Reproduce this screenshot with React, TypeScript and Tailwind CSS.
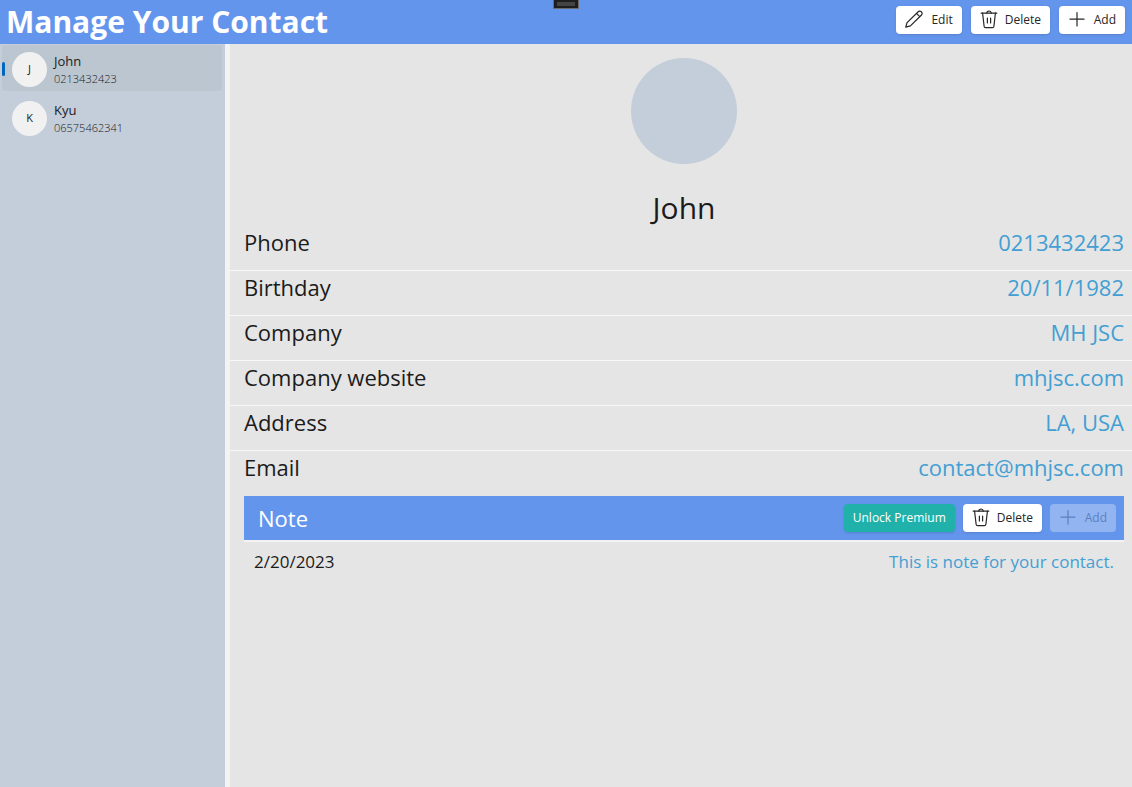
import React, { useState } from 'react';

const contacts = [
  { id: 1, name: 'John', phone: '0213432423' },
  { id: 2, name: 'Kyu', phone: '06575462341' },
];

const details = [
  { label: 'Phone', value: '0213432423' },
  { label: 'Birthday', value: '20/11/1982' },
  { label: 'Company', value: 'MH JSC' },
  { label: 'Company website', value: 'mhjsc.com' },
  { label: 'Address', value: 'LA, USA' },
  { label: 'Email', value: 'contact@mhjsc.com' },
];

const notes = [{ date: '2/20/2023', text: 'This is note for your contact.' }];

function PencilIcon() {
  return (
    <svg className="h-5 w-5" viewBox="0 0 20 20" fill="none" stroke="currentColor" strokeWidth="1.2" strokeLinejoin="round">
      <path d="M1.7 17.2 3.1 12.6 14.2 1.7a2.1 2.1 0 0 1 3 0l.3.3a2.1 2.1 0 0 1 0 3L6.4 15.9Z" />
      <path d="M12.5 3.4 15.8 6.7" />
    </svg>
  );
}

function TrashIcon() {
  return (
    <svg className="h-5 w-5" viewBox="0 0 20 20" fill="none" stroke="currentColor" strokeWidth="1.2" strokeLinejoin="round" strokeLinecap="round">
      <path d="M2.2 3.2h15.6" />
      <path d="M7.8 3.2a2.2 2.2 0 0 1 4.4 0" />
      <path d="M3.6 3.2 5.1 16.2a1.6 1.6 0 0 0 1.6 1.5h6.6a1.6 1.6 0 0 0 1.6-1.5L16.4 3.2" />
      <path d="M8.4 8v5M11.6 8v5" />
    </svg>
  );
}

function PlusIcon() {
  return (
    <svg className="h-5 w-5" viewBox="0 0 20 20" fill="none" stroke="currentColor" strokeWidth="1.2" strokeLinecap="round">
      <path d="M10 2.5v13.5M3 9.2h14" />
    </svg>
  );
}

type ToolButtonProps = {
  icon: React.ReactNode;
  label: string;
  disabled?: boolean;
};

function ToolButton({ icon, label, disabled }: ToolButtonProps) {
  return (
    <button
      type="button"
      disabled={disabled}
      className="flex h-7 min-w-[66px] items-center justify-between gap-[6px] rounded bg-white pr-[9px] pl-2 text-xs text-[#262626] shadow-sm disabled:bg-white/30 disabled:text-[#5d7fbd] disabled:shadow-none"
    >
      {icon}
      <span>{label}</span>
    </button>
  );
}

function App() {
  const [selectedId, setSelectedId] = useState(1);
  const selected = contacts.find((contact) => contact.id === selectedId) ?? contacts[0];

  return (
    <div className="flex min-h-screen flex-col bg-[#f3f3f3] font-['Open_Sans',sans-serif] text-[#1b1b1b]">
      <header className="relative flex h-11 items-center justify-between bg-[#6495ed] pr-[7px] pl-[6px]">
        <h1 className="text-[30px] leading-10 font-bold text-white">Manage Your Contact</h1>
        <div className="absolute top-0 left-1/2 h-[9px] w-[26px] -translate-x-1/2 border border-t-0 border-[#6b6b6b] bg-[#1e1e1e] px-[3px] pt-0.5">
          <div className="h-1 bg-[#444444]" />
        </div>
        <div className="flex gap-[9px] pb-1">
          <ToolButton icon={<PencilIcon />} label="Edit" />
          <ToolButton icon={<TrashIcon />} label="Delete" />
          <ToolButton icon={<PlusIcon />} label="Add" />
        </div>
      </header>

      <div className="flex flex-1 gap-[5px]">
        <aside className="w-[225px] shrink-0 bg-[#c4cdda] py-px pr-[3px] pl-0.5">
          <ul className="flex flex-col gap-[3px]">
            {contacts.map((contact) => (
              <li key={contact.id}>
                <button
                  type="button"
                  onClick={() => setSelectedId(contact.id)}
                  className={`flex h-[46px] w-full items-center rounded pt-0.5 text-left ${
                    contact.id === selectedId ? 'bg-[#bcc6d0]' : ''
                  }`}
                >
                  <span
                    className={`h-[14px] w-[3px] rounded-full ${
                      contact.id === selectedId ? 'bg-[#0067c0]' : ''
                    }`}
                  />
                  <span className="ml-[7px] flex h-[35px] w-[35px] items-center justify-center rounded-full bg-[#f1f1f1] text-[11px]">
                    {contact.name[0]}
                  </span>
                  <span className="ml-[7px] flex flex-col pt-0.5">
                    <span className="text-[13px] leading-[17px]">{contact.name}</span>
                    <span className="text-[11px] leading-[17px] font-light">{contact.phone}</span>
                  </span>
                </button>
              </li>
            ))}
          </ul>
        </aside>

        <main className="flex-1 bg-[#e5e5e5]">
          <div className="flex flex-col items-center pt-[14px] pr-2 pl-[14px]">
            <div className="h-[106px] w-[106px] rounded-full bg-[#c4cdda]" />
            <h2 className="mt-[26px] text-[30px] leading-9">{selected.name}</h2>
          </div>

          <dl className="divide-y divide-[#f8f8f8]">
            {details.map((row) => (
              <div key={row.label} className="flex h-[45px] justify-between pr-2 pl-[14px] text-[22px] leading-8">
                <dt>{row.label}</dt>
                <dd className="text-[#439fd3]">{row.value}</dd>
              </div>
            ))}
          </dl>

          <section className="mr-2 ml-[14px]">
            <div className="flex h-11 items-center justify-between bg-[#6495ed] pr-2 pl-[14px]">
              <h3 className="text-[22px] leading-8 text-white">Note</h3>
              <div className="flex gap-2">
                <button type="button" className="h-7 rounded bg-[#20b2aa] px-[9px] text-xs text-white shadow-sm">
                  Unlock Premium
                </button>
                <ToolButton icon={<TrashIcon />} label="Delete" />
                <ToolButton icon={<PlusIcon />} label="Add" disabled />
              </div>
            </div>
            <ul className="border-t-2 border-[#f3f3f3]">
              {notes.map((note) => (
                <li key={note.date} className="flex h-10 items-center justify-between px-[10px] text-[17px]">
                  <span>{note.date}</span>
                  <span className="text-[#439fd3]">{note.text}</span>
                </li>
              ))}
            </ul>
          </section>
        </main>
      </div>
    </div>
  );
}

export default App;
